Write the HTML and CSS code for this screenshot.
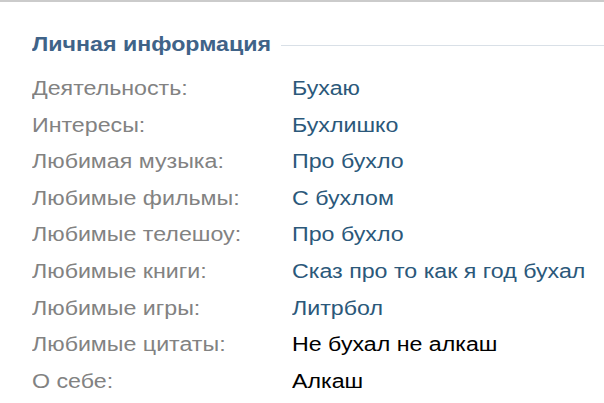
FILE: index.html
```html
<!DOCTYPE html>
<html lang="ru">
<head>
    <meta charset="UTF-8">
    <meta name="viewport" content="width=device-width, initial-scale=1.0">
    <title>Личная информация</title>
    <link rel="stylesheet" href="styles.css">
</head>
<body>
    <div class="profile">
        <div class="section-head">
            <h2><span class="wide">Личная информация</span></h2>
            <div class="rule"></div>
        </div>

        <div class="info">
            <div class="label"><span class="wide">Деятельность:</span></div>
            <div class="value"><a class="wide" href="#">Бухаю</a></div>

            <div class="label"><span class="wide">Интересы:</span></div>
            <div class="value"><a class="wide" href="#">Бухлишко</a></div>

            <div class="label"><span class="wide">Любимая музыка:</span></div>
            <div class="value"><a class="wide" href="#">Про бухло</a></div>

            <div class="label"><span class="wide">Любимые фильмы:</span></div>
            <div class="value"><a class="wide" href="#">С бухлом</a></div>

            <div class="label"><span class="wide">Любимые телешоу:</span></div>
            <div class="value"><a class="wide" href="#">Про бухло</a></div>

            <div class="label"><span class="wide">Любимые книги:</span></div>
            <div class="value"><a class="wide" href="#">Сказ про то как я год бухал</a></div>

            <div class="label"><span class="wide">Любимые игры:</span></div>
            <div class="value"><a class="wide" href="#">Литрбол</a></div>

            <div class="label"><span class="wide">Любимые цитаты:</span></div>
            <div class="value"><span class="wide">Не бухал не алкаш</span></div>

            <div class="label"><span class="wide">О себе:</span></div>
            <div class="value"><span class="wide">Алкаш</span></div>
        </div>
    </div>
</body>
</html>
```

FILE: styles.css
```css
body { margin: 0; background: #fff; font-family: "Liberation Sans", Arial, sans-serif; }
.profile { border-top: 2px solid #cbcbcb; padding: 30px 0 0 32px; }
/* mobile profile font is a touch wider than Arial */
.wide { display: inline-block; transform: scaleX(1.16); transform-origin: left center; white-space: nowrap; }
.section-head { display: flex; align-items: center; height: 24px; }
.section-head h2 { margin: 0; font-size: 20px; line-height: 24px; font-weight: bold; color: #3f6388; white-space: nowrap; }
.rule { flex: 1; height: 1px; margin: 3px 0 0 43px; background: #d9e0e7; }
.info { display: grid; grid-template-columns: 260px 1fr; grid-auto-rows: 36.6px; margin-top: 14px; font-size: 20px; line-height: 36.6px; }
.label { color: #828282; }
.value { color: #000; }
.value a { color: #2b587a; text-decoration: none; }
```
